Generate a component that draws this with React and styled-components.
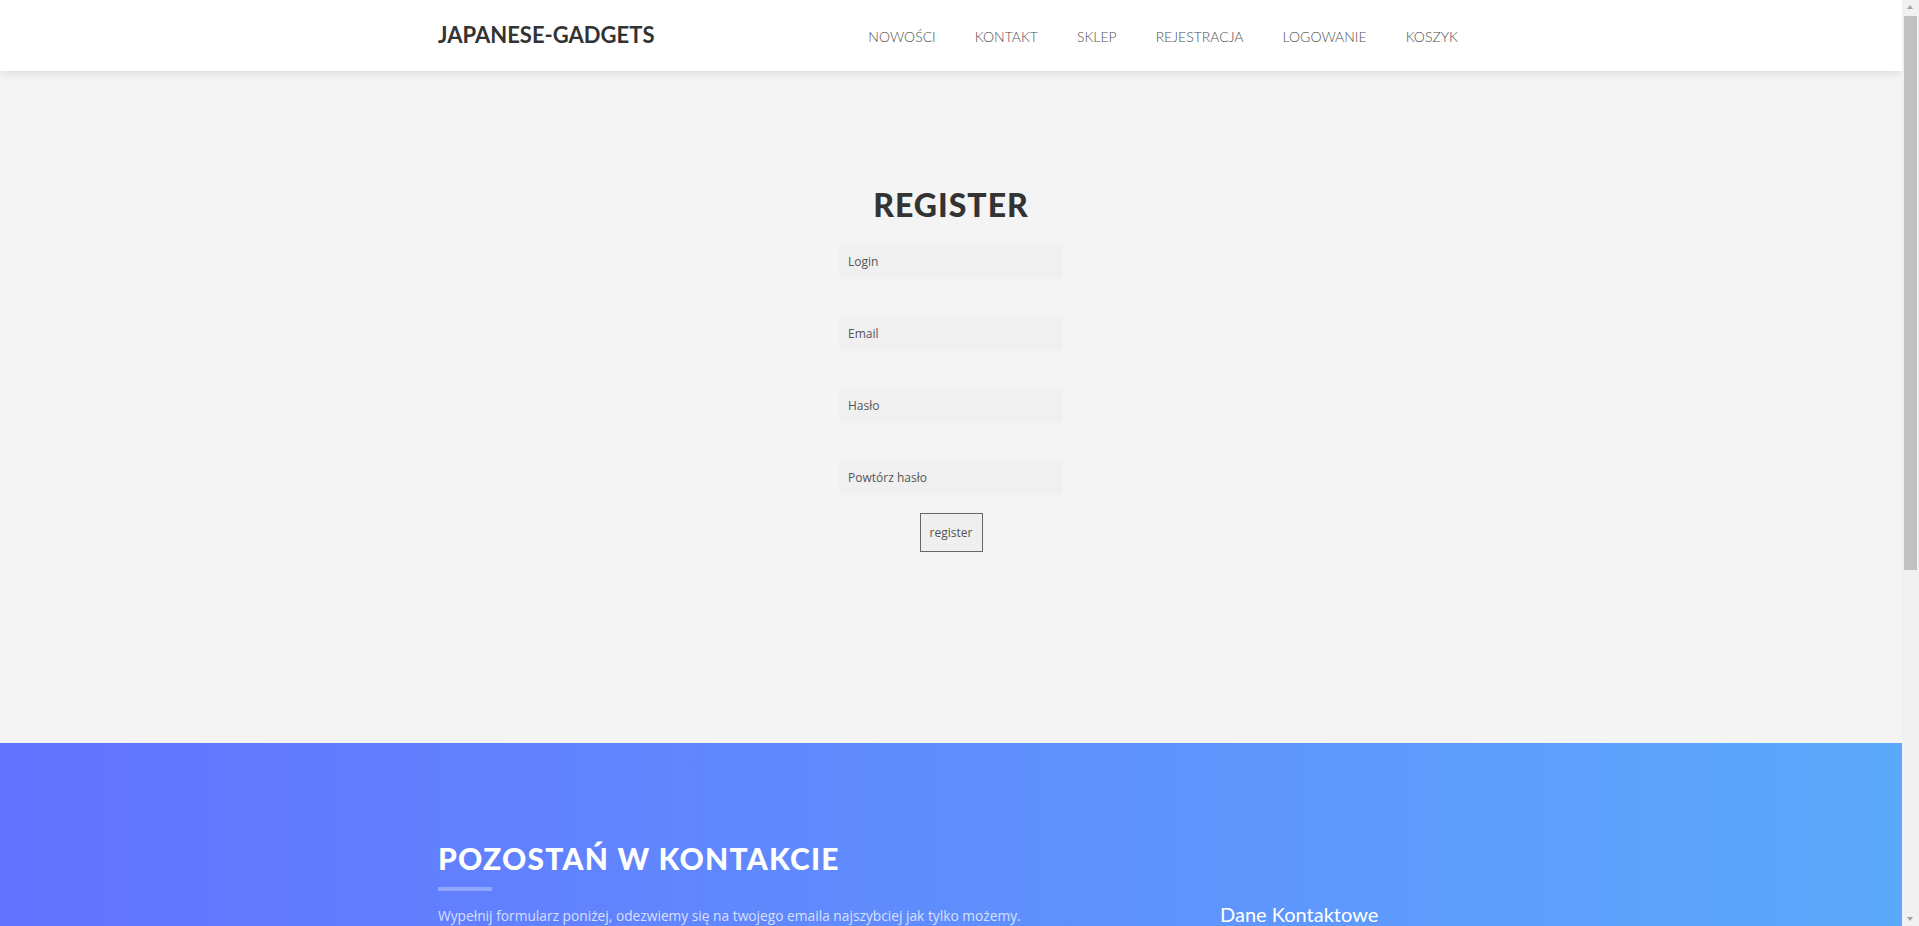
import React from "react";
import styled, { createGlobalStyle } from "styled-components";

const GlobalStyle = createGlobalStyle`
  * {
    box-sizing: border-box;
  }
  html,
  body {
    margin: 0;
    padding: 0;
  }
  body {
    font-family: "Open Sans", "Liberation Sans", sans-serif;
    background: #f4f4f4;
    color: #777;
  }
`;

// the reference was taken with a classic 17px browser scrollbar on the right
const Page = styled.div`
  padding-right: 17px;
`;

const ScrollRail = styled.div`
  position: fixed;
  top: 0;
  right: 0;
  bottom: 0;
  width: 17px;
  background: #f1f1f1;
  z-index: 10;
`;

const ScrollArrow = styled.div`
  position: absolute;
  left: 5px;
  width: 0;
  height: 0;
  border-left: 3.5px solid transparent;
  border-right: 3.5px solid transparent;
  ${({ $down }) =>
    $down
      ? "bottom: 5px; border-top: 4px solid #a3a3a3;"
      : "top: 5px; border-bottom: 4px solid #a3a3a3;"}
`;

const ScrollThumb = styled.div`
  position: absolute;
  top: 16px;
  left: 2px;
  width: 13px;
  height: 554px;
  background: #c1c1c1;
`;

const Container = styled.div`
  width: 1026px;
  margin: 0 auto;
`;

const Header = styled.header`
  position: relative;
  z-index: 2;
  height: 71px;
  background: #fff;
  box-shadow: 0 0 10px rgba(0, 0, 0, 0.15);
`;

const HeaderInner = styled(Container)`
  height: 100%;
  display: flex;
  align-items: center;
  justify-content: space-between;
`;

const Brand = styled.a`
  font-family: "Lato", "Liberation Sans", sans-serif;
  font-size: 22px;
  font-weight: 700;
  color: #333;
  text-transform: uppercase;
  text-decoration: none;
  margin-top: -2px;
`;

const Nav = styled.nav`
  display: flex;
  gap: 39px;
  padding-right: 6px;
`;

const NavLink = styled.a`
  font-family: "Lato", "Liberation Sans", sans-serif;
  font-size: 14px;
  font-weight: 300;
  color: #4f4f4f;
  text-transform: uppercase;
  text-decoration: none;
  margin-top: 2px;
`;

const RegisterSection = styled.section`
  min-height: 672px;
  padding-top: 118px;
  background: #f4f4f4;
  display: flex;
  flex-direction: column;
  align-items: center;
`;

const Title = styled.h1`
  margin: 0 0 22px;
  font-family: "Lato", "Liberation Sans", sans-serif;
  font-size: 32px;
  line-height: 32px;
  font-weight: 900;
  letter-spacing: 1px;
  color: #333;
  text-transform: uppercase;
`;

const FieldGroup = styled.form`
  display: flex;
  flex-direction: column;
  align-items: center;
  gap: 36px;
`;

const Input = styled.input`
  width: 224px;
  height: 36px;
  padding: 0 9px;
  border: none;
  border-radius: 3px;
  background: #f0f0f0;
  font-family: "Open Sans", "Liberation Sans", sans-serif;
  font-size: 12px;
  color: #555;
  outline: none;
  &::placeholder {
    color: #555;
  }
`;

const SubmitButton = styled.button`
  margin-top: -18px;
  width: 63px;
  height: 39px;
  padding: 0;
  border: 1px solid #666;
  background: #efefef;
  font-family: "Open Sans", "Liberation Sans", sans-serif;
  font-size: 12px;
  color: #555;
  cursor: pointer;
`;

const ContactSection = styled.section`
  padding: 100px 0 70px;
  background: linear-gradient(to right, #6372ff 0%, #5ca9fb 100%);
  color: rgba(255, 255, 255, 0.75);
`;

const ContactGrid = styled(Container)`
  display: grid;
  grid-template-columns: 782px 1fr;
`;

const SectionTitle = styled.h2`
  margin: 0;
  font-family: "Lato", "Liberation Sans", sans-serif;
  font-size: 30px;
  line-height: 30px;
  font-weight: 900;
  letter-spacing: 1.2px;
  color: #fff;
  text-transform: uppercase;
  &::after {
    content: "";
    display: block;
    width: 54px;
    height: 4px;
    margin-top: 14px;
    background: rgba(255, 255, 255, 0.3);
  }
`;

const Lead = styled.p`
  margin: 13px 0 40px;
  font-size: 13.75px;
  line-height: 24px;
`;

const FormRow = styled.div`
  display: grid;
  grid-template-columns: 1fr 1fr;
  gap: 30px;
  max-width: 740px;
  margin-bottom: 25px;
`;

const ContactInput = styled.input`
  height: 40px;
  padding: 6px 12px;
  border: 1px solid #ddd;
  border-radius: 0;
  background: #fff;
  font-family: "Open Sans", "Liberation Sans", sans-serif;
  font-size: 15px;
  color: #444;
`;

const ContactTextarea = styled.textarea`
  display: block;
  width: 740px;
  height: 150px;
  padding: 6px 12px;
  border: 1px solid #ddd;
  background: #fff;
  font-family: "Open Sans", "Liberation Sans", sans-serif;
  font-size: 15px;
  color: #444;
  resize: none;
`;

const SendButton = styled.button`
  margin-top: 30px;
  padding: 14px 34px;
  border: 2px solid #fff;
  border-radius: 25px;
  background: transparent;
  font-family: "Open Sans", "Liberation Sans", sans-serif;
  font-size: 15px;
  color: #fff;
`;

const InfoColumn = styled.div`
  padding-top: 59px;
`;

const InfoTitle = styled.h3`
  margin: 0 0 25px;
  font-family: "Lato", "Liberation Sans", sans-serif;
  font-size: 20px;
  line-height: 24px;
  font-weight: 400;
  color: #fff;
`;

const InfoItem = styled.p`
  margin: 0 0 20px;
  font-size: 15px;
  line-height: 24px;
  span {
    display: block;
    color: #fff;
    margin-bottom: 6px;
  }
`;

const Footer = styled.footer`
  padding: 15px 0;
  background: #f6f6f6;
  text-align: center;
  font-size: 14px;
  color: #888;
`;

const navItems = ["Nowości", "Kontakt", "Sklep", "Rejestracja", "Logowanie", "Koszyk"];
const fields = ["Login", "Email", "Hasło", "Powtórz hasło"];

export default function App() {
  return (
    <Page>
      <GlobalStyle />
      <Header>
        <HeaderInner>
          <Brand href="#">Japanese-Gadgets</Brand>
          <Nav>
            {navItems.map((item) => (
              <NavLink key={item} href="#">
                {item}
              </NavLink>
            ))}
          </Nav>
        </HeaderInner>
      </Header>

      <RegisterSection>
        <Title>Register</Title>
        <FieldGroup onSubmit={(e) => e.preventDefault()}>
          {fields.map((f) => (
            <Input
              key={f}
              type={f.startsWith("Has") || f.startsWith("Pow") ? "password" : "text"}
              placeholder={f}
            />
          ))}
          <SubmitButton type="submit">register</SubmitButton>
        </FieldGroup>
      </RegisterSection>

      <ContactSection>
        <ContactGrid>
          <div>
            <SectionTitle>Pozostań w kontakcie</SectionTitle>
            <Lead>
              Wypełnij formularz poniżej, odezwiemy się na twojego emaila
              najszybciej jak tylko możemy.
            </Lead>
            <FormRow>
              <ContactInput placeholder="Imię" />
              <ContactInput placeholder="Email" />
            </FormRow>
            <ContactTextarea placeholder="Wiadomość" />
            <SendButton>Wyślij wiadomość</SendButton>
          </div>
          <InfoColumn>
            <InfoTitle>Dane Kontaktowe</InfoTitle>
            <InfoItem>
              <span>Adres</span>
              ul. Sakury 12, 00-001 Warszawa
            </InfoItem>
            <InfoItem>
              <span>Telefon</span>
              +48 123 456 789
            </InfoItem>
            <InfoItem>
              <span>Email</span>
              kontakt@japanese-gadgets.pl
            </InfoItem>
          </InfoColumn>
        </ContactGrid>
      </ContactSection>

      <Footer>© 2024 Japanese-Gadgets</Footer>

      <ScrollRail>
        <ScrollArrow />
        <ScrollThumb />
        <ScrollArrow $down />
      </ScrollRail>
    </Page>
  );
}
